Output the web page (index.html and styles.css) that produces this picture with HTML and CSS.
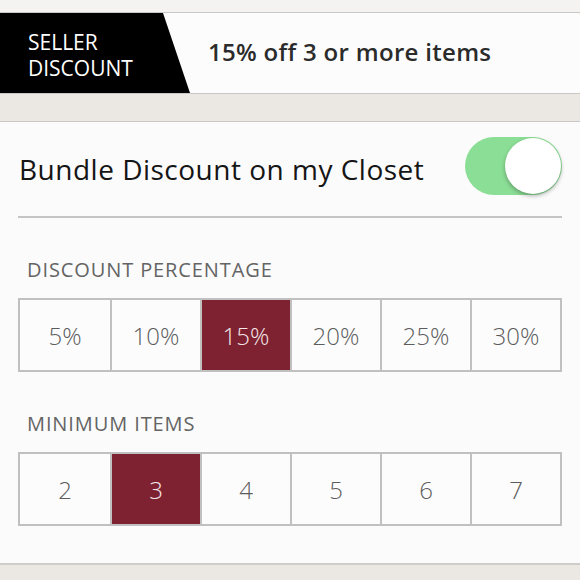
FILE: index.html
```html
<!DOCTYPE html>
<html>
  <head>
    <title>Seller Discount</title>
    <link rel="stylesheet" href="styles.css">
  </head>

  <body>
    <div class="top_strip"></div>

    <div class="header">
      <div class="badge">SELLER<br />DISCOUNT</div>
      <div class="summary">15% off 3 or more items</div>
    </div>

    <div class="band"></div>

    <div class="panel">
      <div class="bundle_row">
        <span class="bundle_title">Bundle Discount on my Closet</span>
        <div class="toggle on"><div class="knob"></div></div>
      </div>

      <div class="section_label">DISCOUNT PERCENTAGE</div>
      <div class="segments">
        <div class="cell">5%</div>
        <div class="cell">10%</div>
        <div class="cell selected">15%</div>
        <div class="cell">20%</div>
        <div class="cell">25%</div>
        <div class="cell">30%</div>
      </div>

      <div class="section_label">MINIMUM ITEMS</div>
      <div class="segments">
        <div class="cell">2</div>
        <div class="cell selected">3</div>
        <div class="cell">4</div>
        <div class="cell">5</div>
        <div class="cell">6</div>
        <div class="cell">7</div>
      </div>
    </div>

    <div class="band bottom"></div>
  </body>
</html>
```

FILE: styles.css
```css
* {
  padding: 0;
  margin: 0;
  box-sizing: border-box;
  font-family: "Open Sans", Lato, sans-serif;
}

body {
  background: #ebe8e3;
  width: 580px;
  height: 580px;
  overflow: hidden;
}

.top_strip {
  height: 13px;
  background: #f4f3f1;
  border-bottom: 1px solid #c9c8c6;
}

.header {
  display: flex;
  align-items: center;
  height: 81px;
  background: #fcfcfc;
  border-bottom: 1px solid #c9c8c6;
}
.badge {
  width: 190px;
  height: 100%;
  background: #000;
  color: #fff;
  font-size: 21px;
  line-height: 26px;
  padding: 16px 0 0 28px;
  clip-path: polygon(0 0, 163px 0, 190px 100%, 0 100%);
}
.summary {
  margin: 0 0 4px 18px;
  font-size: 24px;
  font-weight: 600;
  letter-spacing: 0.3px;
  color: #2b2b2b;
}

.band {
  height: 28px;
  border-bottom: 1px solid #c9c8c6;
}
.band.bottom {
  border-bottom: none;
}

.panel {
  height: 443px;
  background: #fbfbfb;
  padding: 0 18px;
  border-bottom: 2px solid #cfcdca;
}

.bundle_row {
  display: flex;
  align-items: center;
  justify-content: space-between;
  height: 96px;
  border-bottom: 2px solid #c4c4c4;
}
.bundle_title {
  padding-left: 1px;
  font-size: 28px;
  letter-spacing: 0.5px;
  color: #151515;
}

.toggle {
  width: 97px;
  height: 58px;
  border-radius: 29px;
  background: #e4e4e4;
  display: flex;
  align-items: center;
  padding: 1px;
  margin-bottom: 6px;
}
.toggle.on {
  background: #8bde95;
  justify-content: flex-end;
}
.knob {
  width: 56px;
  height: 56px;
  border-radius: 50%;
  background: #fff;
  box-shadow: 0 2px 4px rgba(0, 0, 0, 0.3);
}

.section_label {
  padding: 40px 0 16px 9px;
  font-size: 20px;
  line-height: 24px;
  letter-spacing: 0.9px;
  color: #646464;
}

.segments {
  display: grid;
  grid-template-columns: repeat(6, 1fr);
  height: 74px;
  border: 2px solid #c0c0c0;
  background: #fcfcfc;
}
.cell {
  display: flex;
  align-items: center;
  justify-content: center;
  font-size: 24px;
  font-weight: 300;
  color: #5c5c5c;
  border-left: 2px solid #c0c0c0;
}
.cell:first-child {
  border-left: none;
}
.cell.selected {
  background: #7e2231;
  color: #f4e6e8;
}
```
